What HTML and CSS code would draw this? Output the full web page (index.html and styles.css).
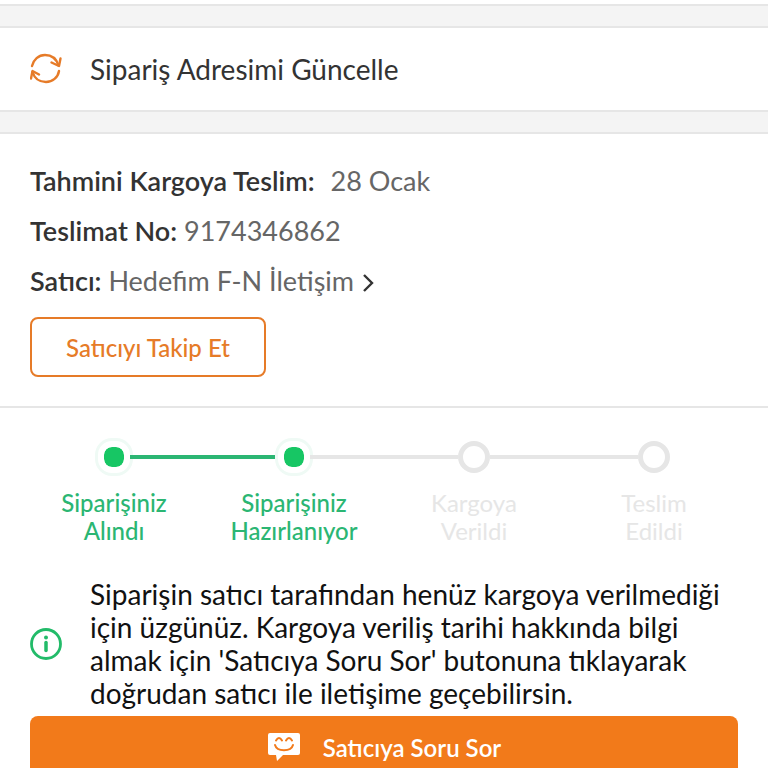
FILE: index.html
```html
<!DOCTYPE html>
<html lang="tr">
<head>
    <meta charset="UTF-8">
    <meta name="viewport" content="width=device-width, initial-scale=1.0">
    <title>Sipariş Detayı</title>
    <link rel="stylesheet" href="styles.css">
</head>
<body>
    <div class="strip"></div>

    <a href="#" class="address-link">
        <svg class="icon" viewBox="0 0 32 32" fill="none" stroke="#e67b28" stroke-width="2.4" stroke-linecap="round" stroke-linejoin="round">
            <path d="M2 13C3.500 6.500 8.500 2 15 2c6.500 0 11.500 4 13.500 10.500"/>
            <path d="M21.500 9.500l7.500 3.500 1.500-7.500"/>
            <path d="M29 18C28 24.500 22.500 29 16 29 9.500 29 4.500 25.500 2.500 19"/>
            <path d="M9 21.500l-6.500-3.500L1 25.500"/>
        </svg>
        <span>Sipariş Adresimi Güncelle</span>
    </a>

    <div class="card">
        <div class="info">
            <div class="row"><b>Tahmini Kargoya Teslim:</b><span class="value">28 Ocak</span></div>
            <div class="row"><b>Teslimat No:</b> 9174346862</div>
            <div class="row">
                <b>Satıcı:</b> <a href="#" lang="en">Hedefim F-N İletişim<svg class="arrow" viewBox="0 0 12 20" fill="none" stroke="#333" stroke-width="2.4"><path d="M2 2l8 8-8 8"/></svg></a>
            </div>
            <button class="follow-btn">Satıcıyı Takip Et</button>
        </div>

        <ol class="steps">
            <li class="step done"><span class="dot"></span>Siparişiniz<br>Alındı</li>
            <li class="step done current"><span class="dot"></span>Siparişiniz<br>Hazırlanıyor</li>
            <li class="step"><span class="dot"></span>Kargoya<br>Verildi</li>
            <li class="step"><span class="dot"></span>Teslim<br>Edildi</li>
        </ol>

        <div class="notice">
            <svg class="icon" viewBox="0 0 32 32" fill="none" stroke="#22bb69">
                <circle cx="16" cy="16" r="14.500" stroke-width="2.800"/>
                <circle cx="16" cy="9.500" r="2" fill="#22bb69" stroke="none"/>
                <path d="M16 14.500v8" stroke-width="3.500" stroke-linecap="round"/>
            </svg>
            <p>Siparişin satıcı tarafından henüz kargoya verilmediği için üzgünüz. Kargoya veriliş tarihi hakkında bilgi almak için 'Satıcıya Soru Sor' butonuna tıklayarak doğrudan satıcı ile iletişime geçebilirsin.</p>
        </div>

        <button class="ask-btn">
            <svg class="chat" viewBox="0 0 34 30" fill="none" stroke="#f27a1a" stroke-width="2" stroke-linecap="round">
                <path d="M3 1h28q2 0 2 2v18q0 2-2 2H16l-6 6-1-6H3q-2 0-2-2V3q0-2 2-2z" fill="#fff" stroke="none"/>
                <path d="M9 8.500q3-5 6 0M19 8.500q3-5 6 0M8 13c2 7 16 7 18 0"/>
            </svg>
            Satıcıya Soru Sor
        </button>
    </div>
</body>
</html>
```
FILE: styles.css
```css
* {
    box-sizing: border-box;
}
html {
    scrollbar-width: none;
}
body {
    margin: 0;
    background: #f4f4f4;
    font-family: Lato, sans-serif;
    font-size: 28px;
    color: #333;
}
a {
    color: inherit;
    text-decoration: none;
}
button {
    font-family: inherit;
    font-size: 24px;
    cursor: pointer;
}
.strip {
    height: 6px;
    background: #fff;
    border-bottom: 2px solid #e6e6e6;
}
.icon {
    width: 32px;
    height: 32px;
    flex: none;
}
.address-link {
    display: flex;
    align-items: center;
    gap: 28px;
    height: 86px;
    margin: 20px 0;
    padding: 0 30px;
    background: #fff;
    border-top: 2px solid #e6e6e6;
    border-bottom: 2px solid #e6e6e6;
}
.card {
    background: #fff;
    border-top: 2px solid #e6e6e6;
    padding-bottom: 30px;
}
.info {
    padding: 22px 30px 29px;
    border-bottom: 2px solid #e6e6e6;
}
.row {
    font-size: 27px;
    line-height: 50px;
    color: #666;
}
.row b {
    font-weight: 600;
    color: #333;
}
.value {
    margin-left: 16px;
}
.arrow {
    width: 12px;
    height: 20px;
    margin-left: 8px;
    vertical-align: -2px;
}
.follow-btn {
    display: block;
    height: 60px;
    margin-top: 11px;
    padding: 0 34px;
    border: 2px solid #e67b28;
    border-radius: 8px;
    background: #fff;
    color: #e67b28;
    font-weight: 500;
}
.steps {
    display: grid;
    grid-template-columns: repeat(4, 1fr);
    margin: 0;
    padding: 33px 24px 0;
    list-style: none;
    text-align: center;
    font-size: 24px;
    line-height: 28px;
    color: #e6e6e6;
}
.step {
    position: relative;
}
.step.done {
    color: #2bb673;
    font-weight: 500;
}
.step::after {
    content: "";
    position: absolute;
    top: 14px;
    left: calc(50% + 16px);
    width: calc(100% - 32px);
    height: 4px;
    background: #e6e6e6;
}
.step.done::after {
    background: #2bb673;
}
.step.current::after {
    background: #e6e6e6;
}
.step:last-child::after {
    display: none;
}
.dot {
    display: block;
    width: 32px;
    height: 32px;
    margin: 0 auto 16px;
    border: 5px solid #e6e6e6;
    border-radius: 50%;
}
.done .dot {
    border: 6px solid #fff;
    border-radius: 14px;
    background: #17c664;
    background-clip: padding-box;
    box-shadow: 0 0 0 3px #effaf5;
}
.notice {
    display: flex;
    align-items: center;
    gap: 28px;
    padding: 33px 30px 6px;
}
.notice p {
    margin: 0;
    line-height: 33px;
    color: #111;
}
.ask-btn {
    display: flex;
    align-items: center;
    justify-content: center;
    gap: 22px;
    width: calc(100% - 60px);
    height: 62px;
    margin: 0 30px;
    border: 0;
    border-radius: 8px;
    background: #f27a1a;
    color: #fff;
    font-weight: 600;
}
.chat {
    width: 34px;
    height: 30px;
}
```
